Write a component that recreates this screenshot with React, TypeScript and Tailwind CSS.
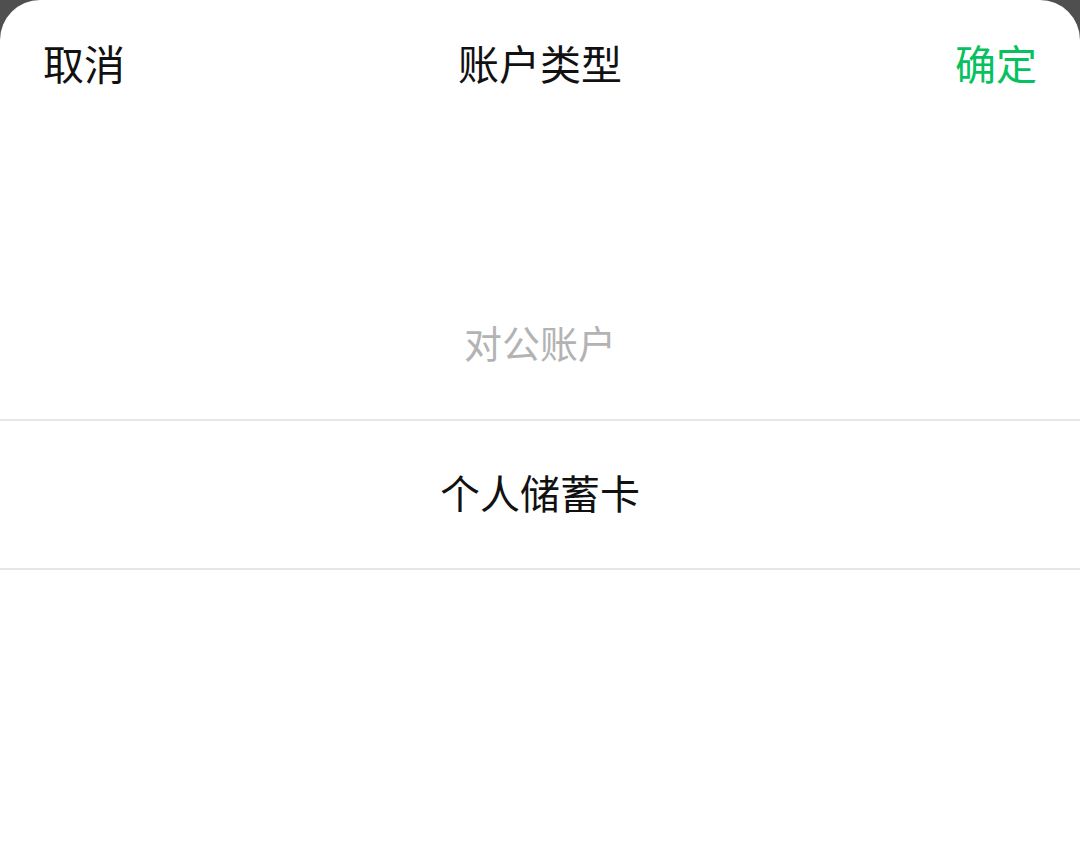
export default function App() {
  return (
    <div
      className="w-[1080px] h-[854px] bg-[#4f4f4f] overflow-hidden"
      style={{ fontFamily: '"Noto Sans CJK SC", "Noto Sans", sans-serif' }}
    >
      <div className="w-full h-full bg-white rounded-t-[40px] flex flex-col">
        <div className="h-[124px] flex items-center justify-between px-[43px] text-[41px] leading-none">
          <span className="text-[#111111]">取消</span>
          <span className="text-[#111111]">账户类型</span>
          <span className="text-[#07c160]">确定</span>
        </div>
        <div className="h-[146px]" />
        <div className="h-[149px] pb-[5px] flex items-center justify-center text-[38px] text-[#b3b3b3] leading-none">
          对公账户
        </div>
        <div className="h-[2px] bg-[#e6e6e6]" />
        <div className="h-[147px] pb-[5px] flex items-center justify-center text-[40px] text-[#111111] leading-none">
          个人储蓄卡
        </div>
        <div className="h-[2px] bg-[#e6e6e6]" />
      </div>
    </div>
  );
}
